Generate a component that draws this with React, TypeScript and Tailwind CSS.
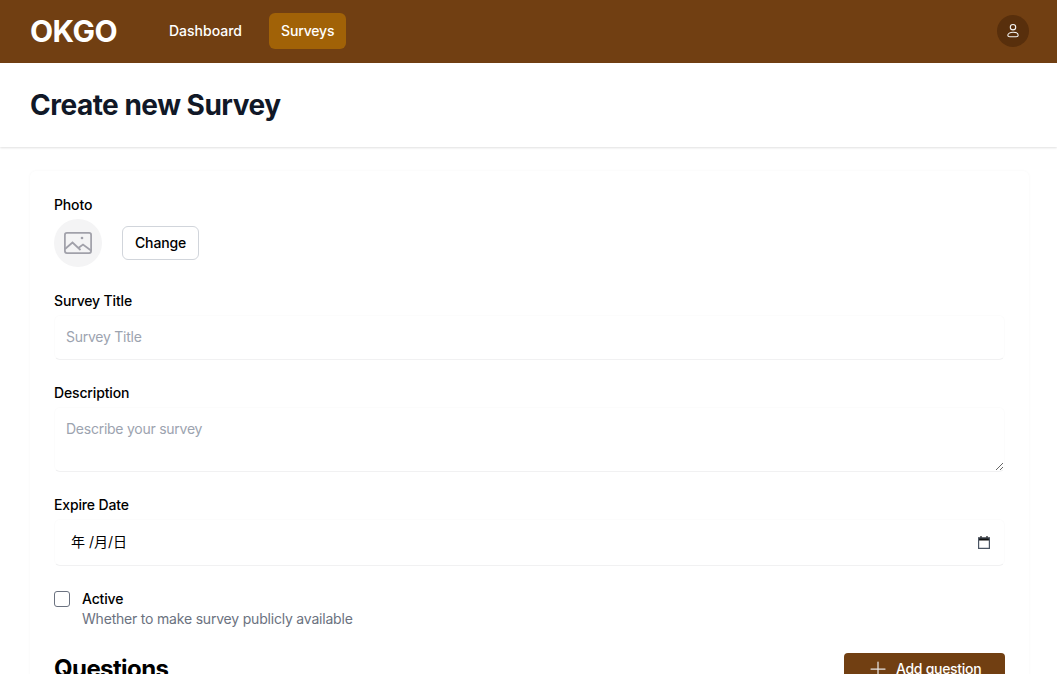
import { Plus } from "lucide-react";

function Field({ label, children }: { label: string; children: React.ReactNode }) {
  return (
    <div>
      <label className="block text-sm font-medium tracking-[-0.15px] text-black">{label}</label>
      {children}
    </div>
  );
}

const inputClass =
  "mt-1 -mb-px block w-full rounded-md border border-[#fcfcfc] border-b-[#f1f1f2] pt-[11px] pb-3 pl-[11px] pr-3 text-sm tracking-[-0.25px] outline-none placeholder:text-[#9ca3af]";

export default function App() {
  return (
    <div className="h-screen overflow-hidden bg-white font-['Inter',sans-serif]">
      <nav className="flex h-[63px] items-center justify-between bg-[#713f12] pb-px pl-[30px] pr-[28px]">
        <div className="flex items-center">
          <div className="w-[127px] text-3xl font-bold tracking-[-0.5px] text-white">OKGO</div>
          <div className="flex gap-[15px]">
            <a className="rounded-md px-3 py-2 text-sm font-medium text-white">Dashboard</a>
            <a className="rounded-md bg-[#a16207] px-3 py-2 text-sm font-medium tracking-[-0.15px] text-white">Surveys</a>
          </div>
        </div>
        <button className="flex h-8 w-8 items-center justify-center rounded-full bg-[#582f0c]">
          <svg viewBox="0 0 16 16" className="h-4 w-4 text-[#f5f5f4]" fill="none" stroke="currentColor" strokeWidth="1.1">
            <circle cx="8" cy="4.2" r="2.7" />
            <path d="M8 9.2c-3 0-5.2 1.4-5.2 3 0 1 1 1.5 2 1.5h6.4c1 0 2-.5 2-1.5 0-1.6-2.2-3-5.2-3z" />
          </svg>
        </button>
      </nav>

      <header className="bg-white px-[30px] py-6 shadow-[0_1px_2px_rgba(0,0,0,0.12)]">
        <h1 className="text-[28px] leading-9 font-bold tracking-[-0.5px] text-[#111827]">Create new Survey</h1>
      </header>

      <main className="pb-6 pl-[30px] pr-[28px] pt-6">
        <div className="space-y-6 rounded-md bg-white p-6 shadow-[0_0_3px_rgba(0,0,0,0.04)]">
          <Field label="Photo">
            <div className="mt-1 flex items-center">
              <span className="flex h-12 w-12 items-center justify-center rounded-full bg-[#f4f4f5]">
                <svg viewBox="0 0 28 22" className="h-[22px] w-7 text-[#a1a1aa]" fill="none" stroke="currentColor" strokeWidth="1.75">
                  <rect x="0.9" y="0.9" width="26.2" height="20.2" rx="2" />
                  <path d="M1 17l7.5-6.5 8 7.5M15 15.5l4-3 8 6" />
                  <circle cx="18" cy="6" r="1.3" fill="currentColor" stroke="none" />
                </svg>
              </span>
              <button className="ml-5 rounded-md border border-[#d1d5db] bg-white px-3 py-[6px] text-sm font-medium tracking-[-0.15px] text-black">
                Change
              </button>
            </div>
          </Field>

          <Field label="Survey Title">
            <input className={inputClass} placeholder="Survey Title" />
          </Field>

          <Field label="Description">
            <textarea className={`${inputClass} h-[65px]`} placeholder="Describe your survey" />
          </Field>

          <Field label="Expire Date">
            <div className="mt-1 -mb-px flex h-[47px] w-full items-center justify-between rounded-md border border-[#fcfcfc] border-b-[#f1f1f2] pl-4 pr-[14px] pb-px text-sm text-black">
              <span className="font-['Inter','Noto_Sans_CJK_SC',sans-serif]">年 /月/日</span>
              <svg viewBox="0 0 12 13" className="h-[13px] w-3">
                <path d="M3 0v2M9 0v2" stroke="#111" strokeWidth="1.2" />
                <path d="M0 1.5h12v3H0z" fill="#111" />
                <path d="M.6 2h10.8v10.4H.6z" fill="none" stroke="#4b5563" strokeWidth="1.2" />
              </svg>
            </div>
          </Field>

          <div className="flex">
            <div className="flex h-5 items-center">
              <input type="checkbox" className="h-4 w-4 appearance-none rounded-[3px] border border-[#6b7280] bg-white" />
            </div>
            <div className="ml-3 text-sm">
              <label className="font-medium tracking-[-0.15px] text-black">Active</label>
              <p className="tracking-[-0.2px] text-[#6b7280]">Whether to make survey publicly available</p>
            </div>
          </div>

          <div className="flex items-center justify-between">
            <h3 className="text-2xl font-bold tracking-[-0.6px] text-black">Questions</h3>
            <button className="flex h-8 w-[161px] items-center rounded-sm bg-[#713f12] pl-[22px] text-sm font-medium tracking-[-0.3px] text-white">
              <Plus className="mr-[6px] h-6 w-6 text-[#e7e5e4]" strokeWidth={1.25} />
              Add question
            </button>
          </div>
        </div>
      </main>
    </div>
  );
}
